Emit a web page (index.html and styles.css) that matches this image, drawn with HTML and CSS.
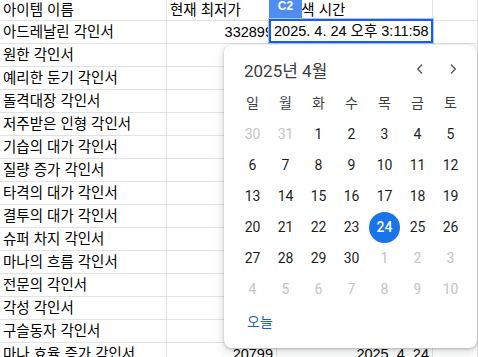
FILE: index.html
```html
<!DOCTYPE html>
<html lang="ko">
<head>
    <meta charset="UTF-8">
    <title>각인서 시세</title>
    <link rel="stylesheet" href="styles.css">
</head>
<body>
    <div class="sheet">
        <div class="row head">
            <div class="cell">아이템 이름</div>
            <div class="cell">현재 최저가</div>
            <div class="cell time-head">검색 시간</div>
            <div class="cell"></div>
        </div>
        <div class="row"><div class="cell">아드레날린 각인서</div><div class="cell num">332899</div><div class="cell"></div><div class="cell"></div></div>
        <div class="row"><div class="cell">원한 각인서</div><div class="cell"></div><div class="cell"></div><div class="cell"></div></div>
        <div class="row"><div class="cell">예리한 둔기 각인서</div><div class="cell"></div><div class="cell"></div><div class="cell"></div></div>
        <div class="row"><div class="cell">돌격대장 각인서</div><div class="cell"></div><div class="cell"></div><div class="cell"></div></div>
        <div class="row"><div class="cell">저주받은 인형 각인서</div><div class="cell"></div><div class="cell"></div><div class="cell"></div></div>
        <div class="row"><div class="cell">기습의 대가 각인서</div><div class="cell"></div><div class="cell"></div><div class="cell"></div></div>
        <div class="row"><div class="cell">질량 증가 각인서</div><div class="cell"></div><div class="cell"></div><div class="cell"></div></div>
        <div class="row"><div class="cell">타격의 대가 각인서</div><div class="cell"></div><div class="cell"></div><div class="cell"></div></div>
        <div class="row"><div class="cell">결투의 대가 각인서</div><div class="cell"></div><div class="cell"></div><div class="cell"></div></div>
        <div class="row"><div class="cell">슈퍼 차지 각인서</div><div class="cell"></div><div class="cell"></div><div class="cell"></div></div>
        <div class="row"><div class="cell">마나의 흐름 각인서</div><div class="cell"></div><div class="cell"></div><div class="cell"></div></div>
        <div class="row"><div class="cell">전문의 각인서</div><div class="cell"></div><div class="cell"></div><div class="cell"></div></div>
        <div class="row"><div class="cell">각성 각인서</div><div class="cell"></div><div class="cell"></div><div class="cell"></div></div>
        <div class="row"><div class="cell">구슬동자 각인서</div><div class="cell"></div><div class="cell"></div><div class="cell"></div></div>
        <div class="row"><div class="cell">마나 효율 증가 각인서</div><div class="cell num">20799</div><div class="cell num">2025. 4. 24</div><div class="cell"></div></div>
    </div>

    <!-- cellule en cours d'edition -->
    <div class="badge">C2</div>
    <div class="editor">2025. 4. 24 오후 3:11:58</div>

    <!-- selecteur de date -->
    <div class="picker">
        <div class="cal-head">
            <span class="month">2025년 4월</span>
            <div class="nav">
                <span class="arrow"><svg width="8" height="12" viewBox="0 0 8 12"><path d="M6 1.5 L1.8 6 L6 10.5" fill="none" stroke="#5f6368" stroke-width="1.6"/></svg></span>
                <span class="arrow"><svg width="8" height="12" viewBox="0 0 8 12"><path d="M2 1.5 L6.2 6 L2 10.5" fill="none" stroke="#5f6368" stroke-width="1.6"/></svg></span>
            </div>
        </div>
        <div class="week">
            <span>일</span><span>월</span><span>화</span><span>수</span><span>목</span><span>금</span><span>토</span>
        </div>
        <div class="days">
            <span class="out">30</span><span class="out">31</span><span>1</span><span>2</span><span>3</span><span>4</span><span>5</span>
            <span>6</span><span>7</span><span>8</span><span>9</span><span>10</span><span>11</span><span>12</span>
            <span>13</span><span>14</span><span>15</span><span>16</span><span>17</span><span>18</span><span>19</span>
            <span>20</span><span>21</span><span>22</span><span>23</span><span><b class="sel">24</b></span><span>25</span><span>26</span>
            <span>27</span><span>28</span><span>29</span><span>30</span><span class="out">1</span><span class="out">2</span><span class="out">3</span>
            <span class="out">4</span><span class="out">5</span><span class="out">6</span><span class="out">7</span><span class="out">8</span><span class="out">9</span><span class="out">10</span>
        </div>
        <div class="foot">오늘</div>
    </div>
</body>
</html>
```

FILE: styles.css
```css
body {
    margin: 0;
    overflow: hidden;
    font-family: "Liberation Sans", "Noto Sans CJK KR", sans-serif;
    font-size: 14.5px;
    color: #000;
    background: #fff;
}

/****** FEUILLE ******/
.row {
    display: grid;
    grid-template-columns: 167px 110px 156px 1fr;
    height: 23px;
}
.row.head {
    height: 21px;
}
.cell {
    box-sizing: border-box;
    border-right: 1px solid #e2e2e2;
    border-bottom: 1px solid #e2e2e2;
    padding: 0 3px;
    line-height: 22px;
    white-space: nowrap;
    overflow: hidden;
}
.head .cell {
    line-height: 20px;
}
.num {
    text-align: right;
}
.time-head {
    padding-left: 11px;
}

/****** EDITION ******/
.badge {
    position: absolute;
    left: 269px;
    top: 0;
    width: 33px;
    height: 18px;
    background: #4f8ef0;
    color: #fff;
    font-size: 12px;
    font-weight: bold;
    line-height: 12px;
    text-align: center;
}
.editor {
    position: absolute;
    left: 269px;
    top: 19px;
    width: 164px;
    height: 24px;
    box-sizing: border-box;
    border: 2px solid #1a5fd6;
    box-shadow: 0 0 0 1px #a8c7fa;
    background: #fff;
    padding: 0 3px;
    line-height: 20px;
    white-space: nowrap;
}

/****** CALENDRIER ******/
.picker {
    position: absolute;
    left: 224px;
    top: 45px;
    width: 253px;
    height: 303px;
    box-sizing: border-box;
    padding: 8px 10px 0 12px;
    background: #fff;
    border-radius: 8px;
    box-shadow: 0 1px 3px rgba(60, 64, 67, 0.3), 0 3px 8px 2px rgba(60, 64, 67, 0.15);
    font-family: Roboto, "Noto Sans CJK KR", sans-serif;
    font-size: 14px;
    color: #1f1f1f;
}
.cal-head {
    display: flex;
    align-items: center;
    height: 32px;
    padding-left: 8px;
}
.month {
    font-size: 17px;
    color: #3c4043;
}
.nav {
    display: flex;
    margin-left: auto;
    margin-right: -2px;
}
.arrow {
    display: flex;
    align-items: center;
    justify-content: center;
    width: 33px;
    height: 32px;
}
.week, .days {
    display: grid;
    grid-template-columns: repeat(7, 33px);
}
.week {
    margin-top: 3px;
    color: #3c4043;
}
.week span, .days span {
    height: 31px;
    line-height: 31px;
    text-align: center;
}
.days .out {
    color: #c4c4c4;
}
.sel {
    display: block;
    width: 31px;
    height: 31px;
    margin: 0 auto;
    border-radius: 50%;
    background: #1a73e8;
    color: #fff;
    font-weight: 500;
}
.foot {
    height: 34px;
    line-height: 34px;
    padding-left: 11px;
    color: #1a5fd0;
}
```
